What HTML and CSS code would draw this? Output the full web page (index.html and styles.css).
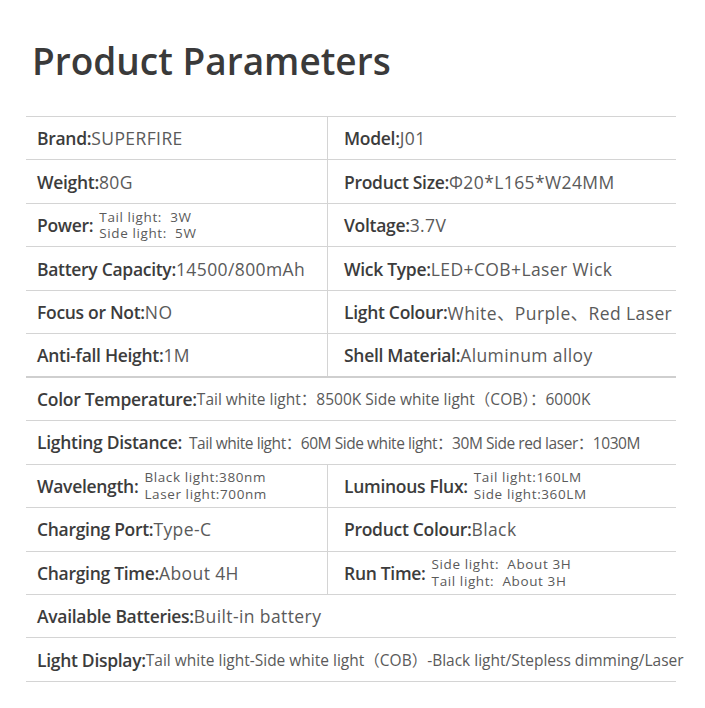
FILE: index.html
```html
<!DOCTYPE html>
<html>
<head>
<meta charset="utf-8">
<link rel="stylesheet" href="styles.css">
</head>
<body>
<div class="page">
  <h1 class="title">Product Parameters</h1>
  <div class="table">
    <div class="row split">
      <div class="cell left"><span class="k">Brand:</span><span class="v">SUPERFIRE</span></div>
      <div class="cell right"><span class="k">Model:</span><span class="v">J01</span></div>
    </div>
    <div class="row split">
      <div class="cell left"><span class="k">Weight:</span><span class="v">80G</span></div>
      <div class="cell right"><span class="k">Product Size:</span><span class="v">Φ20*L165*W24MM</span></div>
    </div>
    <div class="row split">
      <div class="cell left"><span class="k">Power:</span><span class="two"><span>Tail light:&nbsp;&nbsp;3W</span><span>Side light:&nbsp;&nbsp;5W</span></span></div>
      <div class="cell right"><span class="k">Voltage:</span><span class="v">3.7V</span></div>
    </div>
    <div class="row split">
      <div class="cell left"><span class="k">Battery Capacity:</span><span class="v">14500/800mAh</span></div>
      <div class="cell right"><span class="k">Wick Type:</span><span class="v">LED+COB+Laser Wick</span></div>
    </div>
    <div class="row split">
      <div class="cell left"><span class="k">Focus or Not:</span><span class="v">NO</span></div>
      <div class="cell right"><span class="k">Light Colour:</span><span class="v">White、Purple、Red Laser</span></div>
    </div>
    <div class="row split thick">
      <div class="cell left"><span class="k">Anti-fall Height:</span><span class="v">1M</span></div>
      <div class="cell right"><span class="k">Shell Material:</span><span class="v">Aluminum alloy</span></div>
    </div>
    <div class="row full">
      <div class="cell wide"><span class="k">Color Temperature:</span><span class="vs">Tail white light：8500K Side white light（COB）：6000K</span></div>
    </div>
    <div class="row full">
      <div class="cell wide"><span class="k">Lighting Distance:</span><span class="vs gap">Tail white light：60M Side white light：30M Side red laser：1030M</span></div>
    </div>
    <div class="row split">
      <div class="cell left"><span class="k">Wavelength:</span><span class="two"><span>Black light:380nm</span><span>Laser light:700nm</span></span></div>
      <div class="cell right"><span class="k">Luminous Flux:</span><span class="two"><span>Tail light:160LM</span><span>Side light:360LM</span></span></div>
    </div>
    <div class="row split">
      <div class="cell left"><span class="k">Charging Port:</span><span class="v">Type-C</span></div>
      <div class="cell right"><span class="k">Product Colour:</span><span class="v">Black</span></div>
    </div>
    <div class="row split">
      <div class="cell left"><span class="k">Charging Time:</span><span class="v">About 4H</span></div>
      <div class="cell right"><span class="k">Run Time:</span><span class="two"><span>Side light:&nbsp;&nbsp;About 3H</span><span>Tail light:&nbsp;&nbsp;About 3H</span></span></div>
    </div>
    <div class="row full">
      <div class="cell wide"><span class="k">Available Batteries:</span><span class="v">Built-in battery</span></div>
    </div>
    <div class="row full">
      <div class="cell wide"><span class="k">Light Display:</span><span class="vs">Tail white light-Side white light（COB）-Black light/Stepless dimming/Laser</span></div>
    </div>
  </div>
</div>
</body>
</html>
```

FILE: styles.css
```css
html, body {
  margin: 0;
  padding: 0;
  background: #ffffff;
}

body {
  font-family: "Open Sans", "Noto Sans", "Noto Sans CJK SC", sans-serif;
  color: #444444;
}

.page {
  width: 705px;
  height: 708px;
  overflow: hidden;
}

.title {
  margin: 0;
  padding: 37px 0 0 32px;
  font-size: 37px;
  font-weight: 600;
  line-height: 48px;
  color: #3a3a3a;
}

.table {
  margin: 31px 0 0 26px;
  width: 650px;
  border-top: 1px solid #d4d4d4;
}

.row {
  height: 43.46px;
  box-sizing: border-box;
  border-bottom: 1px solid #d4d4d4;
}

.row.thick {
  border-bottom: 2px solid #cfcfcf;
}

.split {
  display: grid;
  grid-template-columns: 302px 1fr;
}

.full {
  display: flex;
}

.cell {
  display: flex;
  align-items: center;
  white-space: nowrap;
}

.left {
  padding-left: 11px;
  border-right: 1px solid #d4d4d4;
}

.right {
  padding-left: 16px;
}

.wide {
  padding-left: 11px;
}

.k {
  font-size: 17.5px;
  font-weight: 600;
  color: #3c3c3c;
  letter-spacing: -0.3px;
}

.v {
  font-size: 17.5px;
  font-weight: 400;
  color: #5a5a5a;
  letter-spacing: 0.4px;
}

.vs {
  font-size: 15.5px;
  font-weight: 400;
  color: #5a5a5a;
  letter-spacing: 0;
}

.vs.gap {
  margin-left: 7px;
  letter-spacing: -0.45px;
}

.two {
  display: flex;
  flex-direction: column;
  margin-left: 6px;
  font-size: 13.5px;
  line-height: 16.5px;
  letter-spacing: 0.6px;
  color: #5a5a5a;
}
```
